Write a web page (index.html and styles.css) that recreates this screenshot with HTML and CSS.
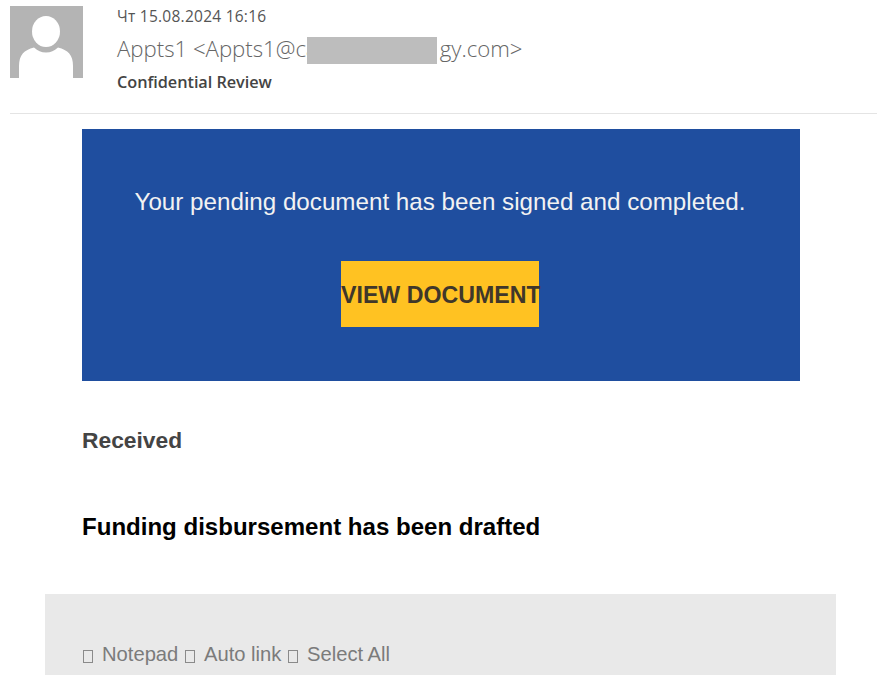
FILE: index.html
```html
<!DOCTYPE html>
<html lang="en">
<head>
<meta charset="utf-8">
<title>Confidential Review</title>
<link rel="stylesheet" href="styles.css">
</head>
<body>
<header class="mail-header">
  <svg class="avatar" viewBox="0 0 73 72" aria-hidden="true">
    <rect width="73" height="72" fill="#b4b4b4"/>
    <ellipse cx="36" cy="25.500" rx="14" ry="15.500" fill="#fff"/>
    <path d="M9 72V60C9 49 14 44 24 41.500 28 45 31 46.500 36 46.500S44 45 48 41.500C58 44 63 49 63 60V72Z" fill="#fff"/>
  </svg>
  <div class="meta">
    <div class="date">Чт 15.08.2024 16:16</div>
    <div class="sender">Appts1 &lt;Appts1@ca<span class="spacer"></span>gy.com&gt;<span class="redact"></span></div>
    <div class="subject">Confidential Review</div>
  </div>
</header>
<main class="content">
  <section class="banner">
    <p class="banner-text">Your pending document has been signed and completed.</p>
    <a class="button">VIEW DOCUMENT</a>
  </section>
  <p class="received">Received</p>
  <p class="funding">Funding disbursement has been drafted</p>
</main>
<footer class="footer">
  <p class="footer-links"><span class="glyph"></span>Notepad <span class="glyph"></span>Auto link <span class="glyph"></span>Select All</p>
</footer>
</body>
</html>
```

FILE: styles.css
```css
html, body {
  margin: 0;
  height: 675px;
  overflow: hidden;
  background: #fff;
}
body {
  font-family: "Liberation Sans", Arial, sans-serif;
}
.mail-header {
  display: flex;
  margin-left: 10px;
  padding-top: 6px;
  box-sizing: border-box;
  border-bottom: 1px solid #e4e4e4;
  height: 114px;
  gap: 34px;
}
.avatar {
  width: 73px;
  height: 72px;
  flex: none;
}
.meta {
  font-family: "Open Sans", sans-serif;
  color: #444;
}
.date {
  font-size: 15.500px;
  line-height: 20px;
  color: #555;
  letter-spacing: 0.25px;
}
.sender {
  position: relative;
  margin-top: 8px;
  font-size: 22.200px;
  font-weight: 300;
  line-height: 30px;
  color: #666;
  white-space: nowrap;
}
.spacer {
  display: inline-block;
  width: 122px;
}
.redact {
  position: absolute;
  left: 190px;
  top: 3px;
  width: 130px;
  height: 27px;
  background: #bdbdbd;
}
.subject {
  margin-top: 8px;
  font-size: 16.300px;
  line-height: 20px;
  font-weight: 600;
  color: #444;
  letter-spacing: -0.05px;
}
.content {
  margin: 15px 77px 0 82px;
}
.banner {
  display: flex;
  flex-direction: column;
  align-items: center;
  height: 252px;
  background: #1f4e9f;
}
.banner-text {
  margin: 58px 2px 0 0;
  font-size: 24.200px;
  line-height: 30px;
  color: #f2f2f2;
  white-space: nowrap;
}
.button {
  margin-top: 44px;
  margin-right: 2px;
  width: 198px;
  height: 66px;
  background: #ffc222;
  color: #40372a;
  font-size: 23.200px;
  font-weight: 700;
  line-height: 68px;
  text-align: center;
  white-space: nowrap;
}
.received {
  margin: 46px 0 0;
  font-size: 22.800px;
  line-height: 26px;
  font-weight: 700;
  color: #444;
}
.funding {
  margin: 60px 0 0;
  font-size: 24.050px;
  line-height: 28px;
  font-weight: 700;
  color: #000;
}
.footer {
  margin: 53px 41px 0 45px;
  height: 82px;
  background: #e9e9e9;
  padding: 47px 0 0 37px;
  box-sizing: border-box;
}
.footer-links {
  margin: 0;
  font-size: 20.200px;
  line-height: 26px;
  color: #7b7b7b;
  white-space: nowrap;
}
.glyph {
  display: inline-block;
  box-sizing: border-box;
  width: 10px;
  height: 13px;
  margin: 0 9px 0 1px;
  border: 1.500px solid #8a8a8a;
  vertical-align: -2px;
}
```
